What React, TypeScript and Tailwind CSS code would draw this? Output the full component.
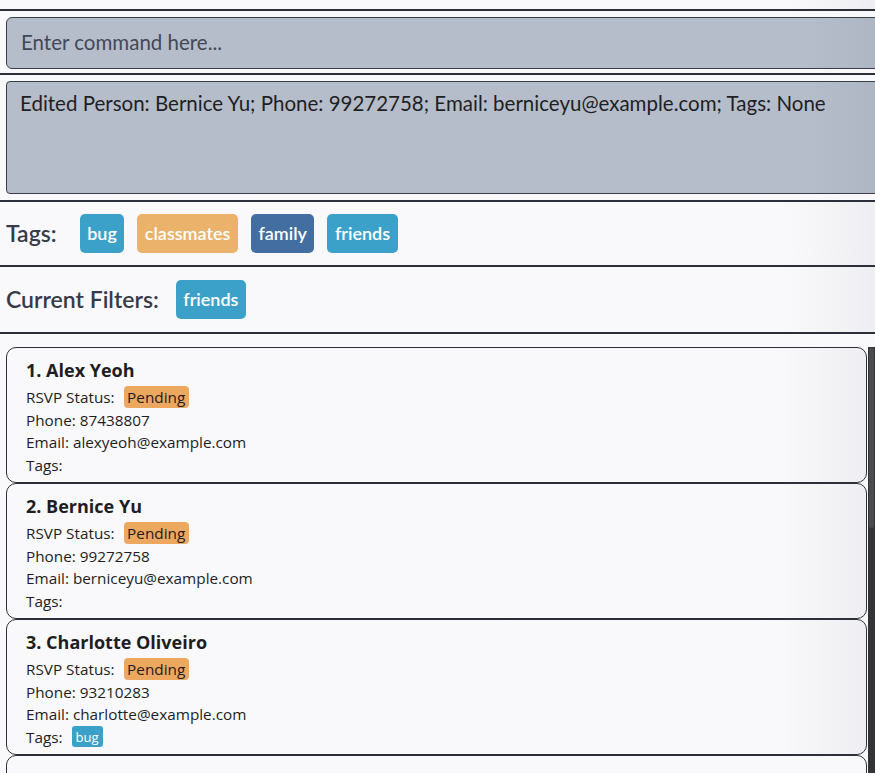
import React from "react";

type Person = {
  name: string;
  phone: string;
  email: string;
  tags: string[];
};

const people: Person[] = [
  { name: "Alex Yeoh", phone: "87438807", email: "alexyeoh@example.com", tags: [] },
  { name: "Bernice Yu", phone: "99272758", email: "berniceyu@example.com", tags: [] },
  { name: "Charlotte Oliveiro", phone: "93210283", email: "charlotte@example.com", tags: ["bug"] },
];

const tagColours: Record<string, string> = {
  bug: "bg-[#3ca1c9]",
  classmates: "bg-[#eab26b]",
  family: "bg-[#426ea1]",
  friends: "bg-[#3ca1c9]",
};

function Chip({ label }: { label: string }) {
  return (
    <span
      className={`${tagColours[label]} h-[39px] px-[7.5px] rounded-[5px] flex items-center text-white text-[18px] font-semibold font-['Lato',sans-serif]`}
    >
      {label}
    </span>
  );
}

function PersonCard({ index, person }: { index: number; person: Person }) {
  return (
    <div className="h-[136px] shrink-0 border-[1.5px] border-[#2e3039] rounded-[10px] bg-gradient-to-r from-[#f9f9fb] from-90% to-[#eeeef2] pl-[19px] pt-[9px] text-[15.3px] text-[#1d1d22] leading-[22.5px] font-['Open_Sans',sans-serif]">
      <div className="text-[18px] font-bold leading-[27px] mb-[2px]">
        {index}. {person.name}
      </div>
      <div className="flex items-center">
        <span>RSVP Status:</span>
        <span className="ml-[9px] h-[22px] px-[3.5px] rounded-[4px] bg-[#eca85e] flex items-center">Pending</span>
      </div>
      <div>Phone: {person.phone}</div>
      <div>Email: {person.email}</div>
      <div className="flex items-center">
        <span>Tags:</span>
        {person.tags.map((t) => (
          <span
            key={t}
            className={`${tagColours[t]} ml-[9px] h-[21px] px-[4px] rounded-[3px] text-white text-[13px] flex items-center`}
          >
            {t}
          </span>
        ))}
      </div>
    </div>
  );
}

export default function App() {
  return (
    <div className="w-[875px] h-[773px] overflow-hidden bg-[#f9f9fb] flex flex-col font-['Lato','Open_Sans',sans-serif]">
      {/* top strip (cut off title) */}
      <div className="h-[11px] shrink-0 border-b-2 border-[#2c2f3a] bg-gradient-to-r from-[#f9f9fb] from-90% to-[#eeeef2]" />

      {/* command box */}
      <div className="shrink-0 pl-[6px] pt-[6px] pb-[4px] border-b-2 border-[#2c2f3a] overflow-hidden">
        <div className="h-[52px] -mr-[20px] rounded-[6px] border-[1.5px] border-[#3a3d47] bg-gradient-to-r from-[#b6bdca] from-90% to-[#aeb5c2] flex items-center pl-[14px] pb-[2px] text-[20.5px] text-[#444856]">
          Enter command here...
        </div>
      </div>

      {/* result box */}
      <div className="shrink-0 pl-[6px] pt-[6px] pb-[6px] border-b-2 border-[#2c2f3a] overflow-hidden">
        <div className="h-[113px] -mr-[20px] rounded-[4px] border-[1.5px] border-[#3a3d47] bg-gradient-to-r from-[#b6bdca] from-90% to-[#aeb5c2] pl-[13px] pt-[6px] text-[20.5px] text-[#1e1f24]">
          Edited Person: Bernice Yu; Phone: 99272758; Email: berniceyu@example.com; Tags: None
        </div>
      </div>

      {/* tags */}
      <div className="h-[65px] shrink-0 border-b-2 border-[#2c2f3a] flex items-center pl-[6px] gap-[13px] bg-gradient-to-r from-[#f9f9fb] from-90% to-[#eeeef2]">
        <span className="text-[23px] font-semibold text-[#383b47] mr-[10px]">Tags:</span>
        <Chip label="bug" />
        <Chip label="classmates" />
        <Chip label="family" />
        <Chip label="friends" />
      </div>

      {/* filters */}
      <div className="h-[67px] shrink-0 border-b-2 border-[#2c2f3a] flex items-center pl-[6px] gap-[17px] bg-gradient-to-r from-[#f9f9fb] from-90% to-[#eeeef2]">
        <span className="text-[23px] font-semibold text-[#383b47]">Current Filters:</span>
        <Chip label="friends" />
      </div>

      {/* person list */}
      <div className="flex-1 flex pt-[13px] pl-[6px] min-h-0">
        <div className="flex-1 flex flex-col overflow-hidden">
          {people.map((p, i) => (
            <PersonCard key={p.name} index={i + 1} person={p} />
          ))}
          <div className="h-[136px] shrink-0 border-[1.5px] border-[#2e3039] rounded-[10px] bg-[#f9f9fb]" />
        </div>
        <div className="w-[7px] ml-[1px] bg-[#333436] flex flex-col p-[1px]">
          <div className="h-[180px] bg-[#4a4b4e] rounded-[2px]" />
        </div>
      </div>
    </div>
  );
}
